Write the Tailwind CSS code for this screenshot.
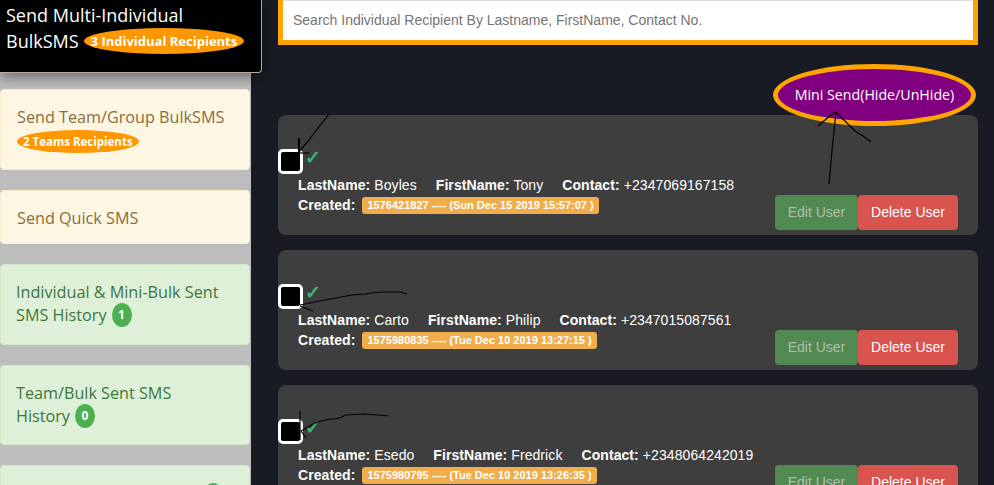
<!DOCTYPE html>
<html><head><meta charset="utf-8"><script src="https://cdn.jsdelivr.net/npm/@tailwindcss/browser@4"></script></head>
<body class="bg-[#181b23]">
<div class="relative flex h-[485px] w-[994px] overflow-hidden bg-[#181b23] font-['Liberation_Sans',sans-serif] text-[14px] text-white">
  <aside class="w-[251px] shrink-0 bg-[#bdbdbd] font-['Open_Sans',sans-serif]">
    <div class="relative z-10 h-[73px] w-[262px] rounded-br-[4px] border-r border-b border-[#b5ab98] bg-black pl-[6px] pt-[3px] text-[18px] leading-[25px] shadow-[0_4px_14px_rgba(0,0,0,0.45)]">
      <div>Send Multi-Individual</div>
      <div class="flex items-center gap-[5px]">BulkSMS <span class="rounded-[50%] bg-[#ff9800] px-[7px] text-[13px] font-bold leading-[26px]">3 Individual Recipients</span></div>
    </div>
    <div class="mt-[16px] flex flex-col gap-[20px] text-[16.2px] leading-[22px]">
      <div class="h-[81px] w-[250px] shrink-0 rounded-[4px] border border-[#faebcc] bg-[#fdf6e3] pl-[16px] pt-[16px] text-[#8a6d3b]">
        <div>Send Team/Group BulkSMS</div>
        <span class="mt-[2px] inline-block rounded-[50%] bg-[#ff9800] px-[6px] text-[11.5px] font-bold leading-[23px] text-white">2 Teams Recipients</span>
      </div>
      <div class="h-[54px] w-[250px] shrink-0 rounded-[4px] border border-[#faebcc] bg-[#fdf6e3] pl-[16px] pt-[16px] text-[#8a6d3b]">Send Quick SMS</div>
      <div class="h-[81px] w-[250px] shrink-0 rounded-[4px] border border-[#d6e9c6] bg-[#dff0d8] pl-[15px] pt-[16px] text-[#3c763d]">
        <div>Individual &amp; Mini-Bulk Sent</div>
        <div class="flex items-center gap-[5px]">SMS History <span class="flex h-[24px] w-[20px] items-center justify-center rounded-[50%] bg-[#4caf50] text-[12px] font-bold text-white">1</span></div>
      </div>
      <div class="h-[80px] w-[250px] shrink-0 rounded-[4px] border border-[#d6e9c6] bg-[#dff0d8] pl-[15px] pt-[16px] text-[#3c763d]">
        <div>Team/Bulk Sent SMS</div>
        <div class="flex items-center gap-[5px]">History <span class="flex h-[24px] w-[20px] items-center justify-center rounded-[50%] bg-[#4caf50] text-[12px] font-bold text-white">0</span></div>
      </div>
      <div class="relative h-[60px] w-[250px] shrink-0 rounded-[4px] border border-[#d6e9c6] bg-[#dff0d8]">
        <span class="absolute left-[202px] top-[17px] h-[24px] w-[20px] rounded-[50%] bg-[#4caf50]"></span>
      </div>
    </div>
  </aside>
  <main class="flex min-w-0 flex-1 flex-col pl-[27px] pr-[16px]">
    <div class="h-[45px] shrink-0 border-x-[5px] border-b-[5px] border-[#ffa500] bg-white pl-[10px] pt-[12px] leading-[16px] text-[#757575] shadow-[inset_0_1px_0_#ddd]">Search Individual Recipient By Lastname, FirstName, Contact No.</div>
    <div class="relative z-10 mr-[2px] mt-[19px] flex h-[62px] w-[203px] shrink-0 items-center justify-center self-end rounded-[50%] border-[5px] border-[#ffa500] bg-[#800080] pb-[1px] font-['Open_Sans',sans-serif] text-[14.2px]">Mini Send(Hide/UnHide)</div>
    <div class="-mt-[11px] flex flex-col gap-[15px] tracking-[0.08px]">
      <article class="flex h-[120px] shrink-0 items-end justify-between rounded-[8px] bg-[#3e3e3e] pb-[5px] pr-[20px]">
        <div class="self-start pt-[34px]">
          <div class="flex"><span class="block h-[25px] w-[25px] rounded-[5px] border-[3px] border-white bg-black"></span><span class="ml-[2px] pt-[1px] text-[19px] font-bold leading-[16px] text-[#3cb371]">✓</span></div>
          <div class="pl-[20px] pt-[1px] leading-[20px]"><b>LastName:</b> Boyles <b class="ml-[15px]">FirstName:</b> Tony <b class="ml-[15px]">Contact:</b> +2347069167158</div>
          <div class="flex items-center pl-[20px] leading-[20px]"><b>Created:</b><span class="ml-[7px] rounded-[3px] bg-[#f0ad4e] px-[5px] text-[11px] font-bold leading-[17px] tracking-normal">1576421827 ---- (Sun Dec 15 2019 15:57:07 )</span></div>
        </div>
        <div class="flex tracking-normal"><button class="h-[35px] w-[83px] rounded-[4px] bg-[#508a50] text-[#b0bdb0]">Edit User</button><button class="h-[35px] w-[100px] rounded-[4px] bg-[#d9534f]">Delete User</button></div>
      </article>
      <article class="flex h-[120px] shrink-0 items-end justify-between rounded-[8px] bg-[#3e3e3e] pb-[5px] pr-[20px]">
        <div class="self-start pt-[34px]">
          <div class="flex"><span class="block h-[25px] w-[25px] rounded-[5px] border-[3px] border-white bg-black"></span><span class="ml-[2px] pt-[1px] text-[19px] font-bold leading-[16px] text-[#3cb371]">✓</span></div>
          <div class="pl-[20px] pt-[1px] leading-[20px]"><b>LastName:</b> Carto <b class="ml-[15px]">FirstName:</b> Philip <b class="ml-[15px]">Contact:</b> +2347015087561</div>
          <div class="flex items-center pl-[20px] leading-[20px]"><b>Created:</b><span class="ml-[7px] rounded-[3px] bg-[#f0ad4e] px-[5px] text-[11px] font-bold leading-[17px] tracking-normal">1575980835 ---- (Tue Dec 10 2019 13:27:15 )</span></div>
        </div>
        <div class="flex tracking-normal"><button class="h-[35px] w-[83px] rounded-[4px] bg-[#508a50] text-[#b0bdb0]">Edit User</button><button class="h-[35px] w-[100px] rounded-[4px] bg-[#d9534f]">Delete User</button></div>
      </article>
      <article class="flex h-[120px] shrink-0 items-end justify-between rounded-[8px] bg-[#3e3e3e] pb-[5px] pr-[20px]">
        <div class="self-start pt-[34px]">
          <div class="flex"><span class="block h-[25px] w-[25px] rounded-[5px] border-[3px] border-white bg-black"></span><span class="ml-[2px] pt-[1px] text-[19px] font-bold leading-[16px] text-[#3cb371]">✓</span></div>
          <div class="pl-[20px] pt-[1px] leading-[20px]"><b>LastName:</b> Esedo <b class="ml-[15px]">FirstName:</b> Fredrick <b class="ml-[15px]">Contact:</b> +2348064242019</div>
          <div class="flex items-center pl-[20px] leading-[20px]"><b>Created:</b><span class="ml-[7px] rounded-[3px] bg-[#f0ad4e] px-[5px] text-[11px] font-bold leading-[17px] tracking-normal">1575980795 ---- (Tue Dec 10 2019 13:26:35 )</span></div>
        </div>
        <div class="flex tracking-normal"><button class="h-[35px] w-[83px] rounded-[4px] bg-[#508a50] text-[#b0bdb0]">Edit User</button><button class="h-[35px] w-[100px] rounded-[4px] bg-[#d9534f]">Delete User</button></div>
      </article>
    </div>
  </main>
  <svg class="pointer-events-none absolute left-0 top-0 z-20" width="994" height="485" viewBox="0 0 994 485" fill="none" stroke="#000" stroke-width="1.2">
    <path d="M329 114 L318 128 L309 140 L299 152"/>
    <path d="M299 138 V154" stroke-width="2"/><path d="M299 153 H309"/>
    <path d="M829 184 L832 150 L836 112"/>
    <path d="M818 126 L832 114 L836 112 L855 131 L863 136 L871 142"/>
    <path d="M300 305 L320 301 L352 295 L365 294 L380 292 L400 292 L407 294"/>
    <path d="M300 306 L313 311"/>
    <path d="M300 411 V440"/>
    <path d="M301 431 L315 423 L325 420 L340 418 L345 415 L365 414 L389 416"/>
    <path d="M301 431 L306 438"/>
  </svg>
</div>
</body></html>
